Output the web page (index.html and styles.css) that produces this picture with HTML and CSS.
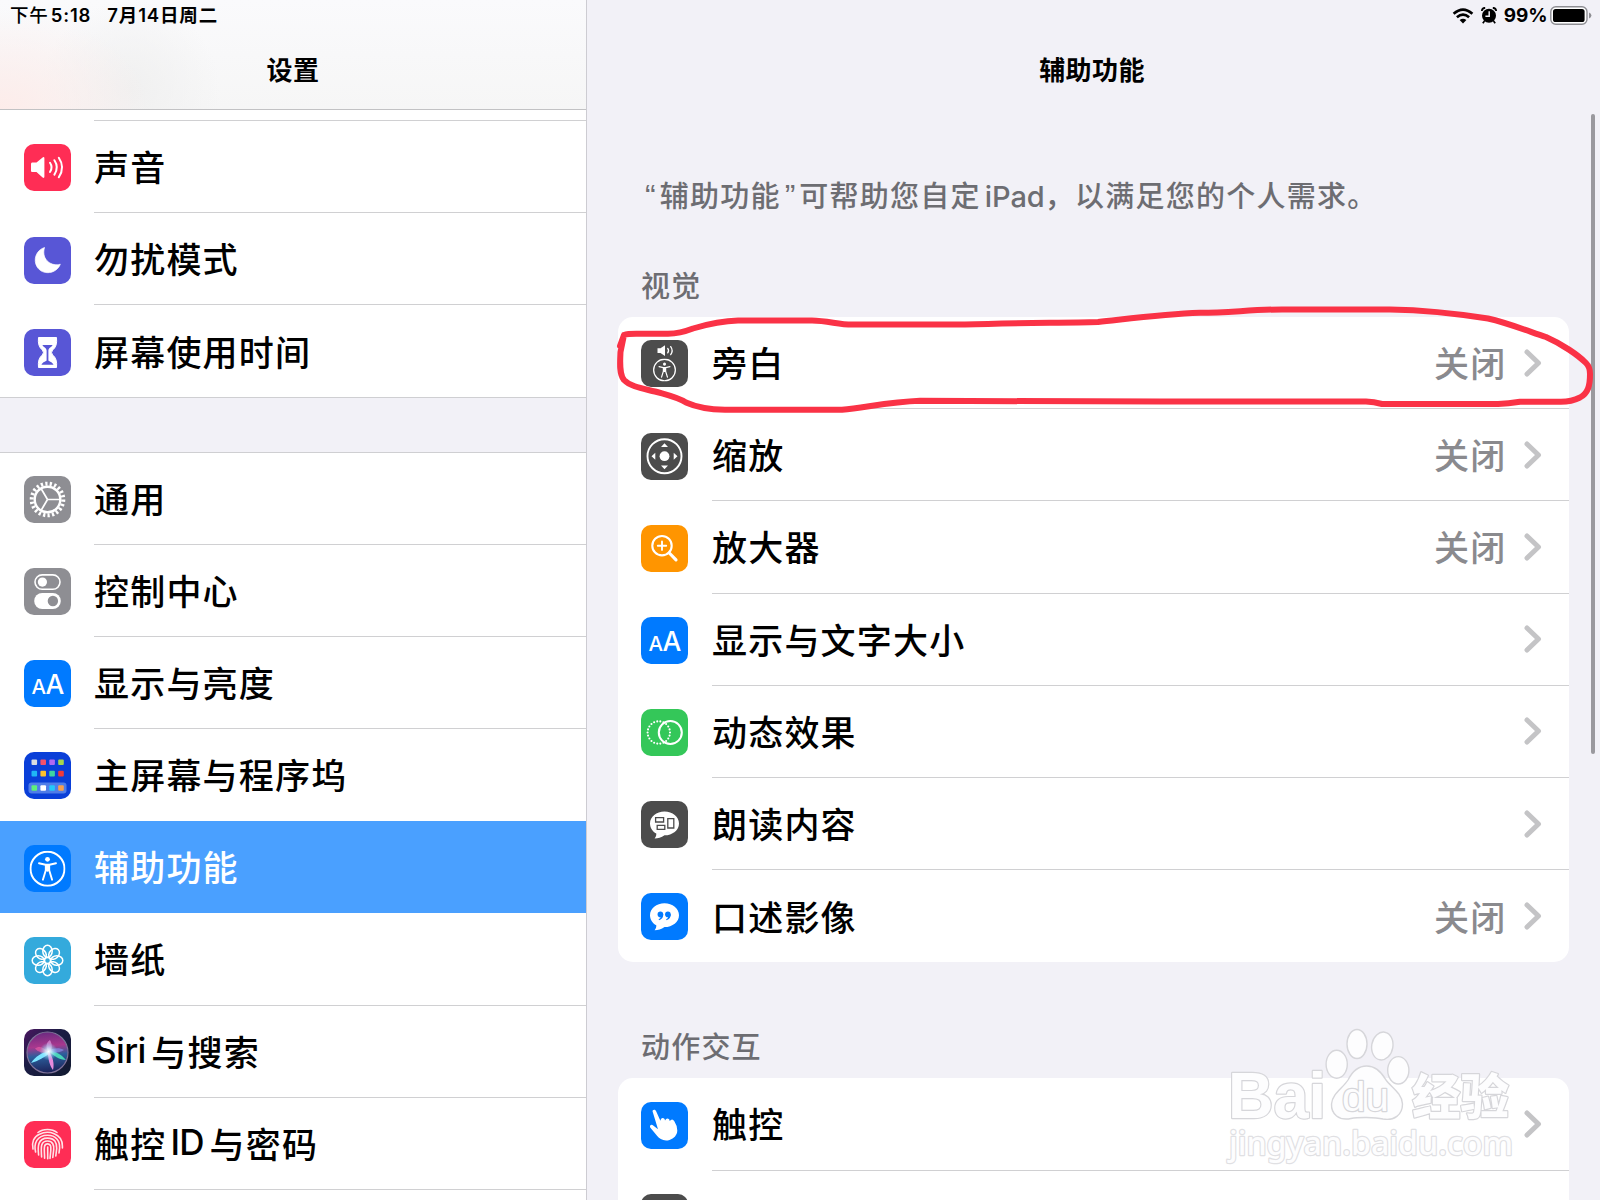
FILE: index.html
```html
<!DOCTYPE html>
<html lang="zh-CN">
<head>
    <meta charset="UTF-8">
    <meta name="viewport" content="width=device-width, initial-scale=1.0">
    <title>设置</title>
    <link rel="stylesheet" href="styles.css">
</head>
<body>

<!-- Iconos reutilizables -->
<svg class="defs" width="0" height="0">
    <defs>
        <symbol id="chevron" viewBox="0 0 18 28"><path d="M3 3 L14.5 14 L3 25" fill="none" stroke="#c4c4c6" stroke-width="5" stroke-linecap="round" stroke-linejoin="round"/></symbol>
        <symbol id="person" viewBox="0 0 36 36">
            <circle cx="18" cy="18" r="17" fill="none" stroke="#fff" stroke-width="2"/>
            <circle cx="18" cy="8.6" r="2.4" fill="#fff"/>
            <path d="M9.5 12.6 L16 14 H20 L26.5 12.6 M16.3 14 V19.5 L13.4 29 M19.7 14 V19.5 L22.6 29 M18 14 V20" fill="none" stroke="#fff" stroke-width="1.9" stroke-linecap="round" stroke-linejoin="round"/>
            <path d="M15.6 13.5 H20.4 V20 H15.6 Z" fill="#fff"/>
        </symbol>
        <symbol id="letters" viewBox="0 0 47 47">
            <text class="glyph" x="7.4" y="33.6" font-size="20.5">A</text>
            <text class="glyph" x="21.4" y="33.6" font-size="26.5">A</text>
        </symbol>
    </defs>
</svg>

<div class="screen">
    <aside class="sidebar">
        <header class="sidebar-header">
            <div class="status"><span>下午</span><span class="time">5:18</span><span>7月14日周二</span></div>
            <h1>设置</h1>
        </header>

        <ul class="menu first">
            <li class="stub"><span class="label"></span></li>
            <li>
                <svg class="icon red" viewBox="0 0 47 47">
                    <path d="M8 18.5 Q7 18.5 7 20 V26.5 Q7 28 8 28 H12.5 L18.6 33.6 Q20.4 34.6 20.4 32.6 V14.4 Q20.4 12.4 18.6 13.4 L12.5 18.5 Z" fill="#fff"/>
                    <path d="M26 18.7 Q29.2 23.3 26 28 M30.4 16.2 Q35.2 23.3 30.4 30.6 M34.8 13.7 Q41.4 23.3 34.8 33.2" fill="none" stroke="#fff" stroke-width="2" stroke-linecap="round"/>
                </svg>
                <span class="label">声音</span>
            </li>
            <li>
                <svg class="icon purple" viewBox="0 0 47 47"><path d="M20.5 10.5 C12 13.2 8.8 23 13.2 30 C18.5 38.6 32.5 37.2 36.3 27.2 C28.5 29.8 16.8 23.5 20.5 10.5 Z" fill="#fff" stroke="#fff" stroke-width=".7" stroke-linejoin="round"/></svg>
                <span class="label">勿扰模式</span>
            </li>
            <li class="last">
                <svg class="icon purple" viewBox="0 0 47 47">
                    <path d="M14.5 8.5 H32.5 Q33.5 17.5 28.600 21 Q26.5 23.6 28.6 26 Q33.5 29.5 32.5 38.5 H14.5 Q13.5 29.5 18.4 26 Q20.5 23.6 18.4 21 Q13.5 17.5 14.5 8.5 Z" fill="#fff" stroke="#fff" stroke-linejoin="round"/>
                    <path d="M18.4 16 H28.6 C27.6 18.2 24.6 18.6 24.4 21.5 V31.5 C25.6 32.8 28.5 33 29.5 35.8 H17.5 C18.5 33 21.4 32.8 22.6 31.5 V21.5 C22.4 18.6 19.4 18.2 18.4 16 Z" fill="#5856d6"/>
                </svg>
                <span class="label">屏幕使用时间</span>
            </li>
        </ul>

        <ul class="menu second">
            <li>
                <svg class="icon gray" viewBox="0 0 47 47" fill="none" stroke="#fff">
                    <circle cx="23.5" cy="23.5" r="15.8" stroke-width="4" pathLength="88" stroke-dasharray="2 2"/>
                    <circle cx="23.5" cy="23.5" r="12.8" stroke-width="2.4"/>
                    <path d="M23.5 23.5 H36 M23.5 23.5 L17.2 12.7 M23.5 23.5 L17.2 34.3" stroke-width="1.7"/>
                </svg>
                <span class="label">通用</span>
            </li>
            <li>
                <svg class="icon gray" viewBox="0 0 47 47">
                    <rect x="11" y="6.9" width="25" height="14.4" rx="7.2" fill="none" stroke="#fff" stroke-width="1.6"/>
                    <circle cx="18.4" cy="14.1" r="4.6" fill="#fff"/>
                    <rect x="10.2" y="25" width="26.6" height="16" rx="8" fill="#fff"/>
                    <circle cx="28.9" cy="33" r="5.2" fill="#8e8e93"/>
                </svg>
                <span class="label">控制中心</span>
            </li>
            <li>
                <svg class="icon blue" viewBox="0 0 47 47"><use href="#letters"/></svg>
                <span class="label">显示与亮度</span>
            </li>
            <li class="before-selected">
                <svg class="icon royal" viewBox="0 0 47 47">
                    <rect x="4.5" y="30.5" width="38" height="11" rx="3" fill="#4f7de8"/>
                    <rect x="7.5" y="7.5" width="5.6" height="5.6" rx="1" fill="#d8dce0"/>
                    <rect x="16.4" y="7.5" width="5.6" height="5.6" rx="1" fill="#f4516c"/>
                    <rect x="25.3" y="7.5" width="5.6" height="5.6" rx="1" fill="#b269f2"/>
                    <rect x="34.2" y="7.5" width="5.6" height="5.6" rx="1" fill="#a5d64c"/>
                    <rect x="7.5" y="18.8" width="5.6" height="5.6" rx="1" fill="#1fb6f5"/>
                    <rect x="16.4" y="18.8" width="5.6" height="5.6" rx="1" fill="#fbc02d"/>
                    <rect x="25.3" y="18.8" width="5.6" height="5.6" rx="1" fill="#3ed6a0"/>
                    <rect x="34.2" y="18.8" width="5.6" height="5.6" rx="1" fill="#f03a3a"/>
                    <rect x="7.5" y="33.2" width="5.6" height="5.6" rx="1" fill="#5ef07a"/>
                    <rect x="16.4" y="33.2" width="5.6" height="5.6" rx="1" fill="#fff"/>
                    <rect x="25.3" y="33.2" width="5.6" height="5.6" rx="1" fill="#22c8fa"/>
                    <rect x="34.2" y="33.2" width="5.6" height="5.6" rx="1" fill="#f9a04e"/>
                </svg>
                <span class="label">主屏幕与程序坞</span>
            </li>
            <li class="selected">
                <svg class="icon blue" viewBox="0 0 47 47"><use href="#person" x="5.5" y="5.7" width="36" height="36"/></svg>
                <span class="label">辅助功能</span>
            </li>
            <li>
                <svg class="icon cyan" viewBox="0 0 47 47" fill="none" stroke="#fff" stroke-width="1.5">
                    <g id="petals">
                        <ellipse cx="23.5" cy="14.2" rx="4.7" ry="6"/>
                        <ellipse cx="23.5" cy="32.8" rx="4.7" ry="6"/>
                        <ellipse cx="14.2" cy="23.5" rx="6" ry="4.7"/>
                        <ellipse cx="32.8" cy="23.5" rx="6" ry="4.7"/>
                    </g>
                    <use href="#petals" transform="rotate(45 23.5 23.5)"/>
                    <circle cx="23.5" cy="23.5" r="3"/>
                </svg>
                <span class="label">墙纸</span>
            </li>
            <li>
                <svg class="icon" viewBox="0 0 47 47">
                    <defs>
                        <linearGradient id="siriBg" x1="0" y1="0" x2="1" y2="1"><stop offset="0" stop-color="#4a1560"/><stop offset=".4" stop-color="#1c1d45"/><stop offset="1" stop-color="#101a30"/></linearGradient>
                        <linearGradient id="siriOrb" x1=".4" y1="0" x2=".5" y2="1"><stop offset="0" stop-color="#6a2a80"/><stop offset=".35" stop-color="#a8388e"/><stop offset=".58" stop-color="#2b5f9c"/><stop offset="1" stop-color="#1c2058"/></linearGradient>
                        <radialGradient id="siriGlow"><stop offset="0" stop-color="#fff"/><stop offset=".35" stop-color="#d8f4ff" stop-opacity=".75"/><stop offset="1" stop-color="#6fd8ff" stop-opacity="0"/></radialGradient>
                    </defs>
                    <rect width="47" height="47" fill="url(#siriBg)"/>
                    <circle cx="23.5" cy="23.5" r="20.5" fill="url(#siriOrb)" stroke="#7f7399" stroke-width="1.2"/>
                    <path d="M25 22 C18 23 11 28 7 34 C14 32 21 28 26 24 Z" fill="#7ce4ff"/>
                    <path d="M24 21 C29 27 36 31 42 31 C37 25 31 22 24 21 Z" fill="#48d4b8"/>
                    <path d="M24 22 C29 18.5 36 18.5 40 21 C35 24 29 25 24 22 Z" fill="#8c8fe8" opacity=".7"/>
                    <path d="M24 23 C24 31 26 37 29 41 C30.5 35 29 28 25 23 Z" fill="#e58adc"/>
                    <path d="M25 24 C21.5 19 21.5 14 26 11 C28.5 16 28.5 20 25 24 Z" fill="#e9a4e8" opacity=".6"/>
                    <path d="M24 23 C19 17 14 17 11 19.5 C14 23 19 25 24 23 Z" fill="#e85aa4" opacity=".7"/>
                    <circle cx="24.5" cy="22.5" r="9" fill="url(#siriGlow)"/>
                </svg>
                <span class="label"><span class="latin">Siri</span>与搜索</span>
            </li>
            <li>
                <svg class="icon red" viewBox="0 0 47 47" fill="none" stroke="#ffe3e8" stroke-width="1.6" stroke-linecap="round">
                    <path d="M14 11.5 C19 7.4 28 7.4 33 11.5"/>
                    <path d="M9 28 C7.4 21.5 9.8 15.5 15.5 13.2 C24 9 38.5 12 38.4 25 V27"/>
                    <path d="M11.6 31 C9.6 22.5 13 14.2 23.5 14.2 C32 14.2 36 20 35.6 27 L35 32"/>
                    <path d="M14.6 34 C13.6 25.5 13.8 17.1 23.5 17.1 C30.5 17.1 33 21.5 32.7 27.5 L31.8 35"/>
                    <path d="M17.6 36 C17.2 27.5 15.9 20 23.5 20 C29 20 30 24.5 29.7 28.5 L28.8 36.5"/>
                    <path d="M20.6 37.2 C20.6 29.5 18.8 22.9 23.5 22.9 C27.2 22.9 27 26.5 26.8 29.5 L26 37.4"/>
                    <path d="M23.7 26 V37.8"/>
                </svg>
                <span class="label">触控<span class="latin id">ID</span>与密码</span>
            </li>
            <li class="last"></li>
        </ul>
    </aside>

    <main class="detail">
        <div class="status right">
            <svg width="22" height="16" viewBox="0 0 22 16">
                <path d="M1.6 5.8 Q11 -2.6 20.4 5.8 M4.9 9.3 Q11 3.8 17.1 9.3" fill="none" stroke="#000" stroke-width="2.6"/>
                <path d="M11 15.6 L7.6 12.1 Q11 9.2 14.4 12.1 Z"/>
            </svg>
            <svg class="alarm" width="16" height="17" viewBox="0 0 16 17">
                <circle cx="8" cy="8.8" r="7"/>
                <path d="M.8 4 Q1 1 4.2 .8 M15.2 4 Q15 1 11.8 .8 M3.5 14 L1.8 16.2 M12.5 14 L14.2 16.2" fill="none" stroke="#000" stroke-width="1.7"/>
                <path d="M8.2 4.2 V9.3 H4.4" fill="none" stroke="#f2f1f7" stroke-width="1.5"/>
            </svg>
            <span>99%</span>
            <svg class="battery" width="42" height="19" viewBox="0 0 42 19">
                <rect x=".8" y=".8" width="36.2" height="17.4" rx="5" fill="#fff" stroke="#8e8e93" stroke-width="1.4"/>
                <rect x="3" y="3" width="31.6" height="13" rx="2.6"/>
                <path d="M39 6.4 Q41.4 7.4 41.4 9.5 Q41.4 11.6 39 12.6 Z" fill="#8e8e93"/>
            </svg>
        </div>
        <h1>辅助功能</h1>

        <p class="intro"><span class="quote">“</span>辅助功能<span class="quote">”</span>可帮助您自定<span class="latin ipad">iPad</span>，以满足您的个人需求。</p>

        <h2>视觉</h2>
        <ul class="card">
            <li>
                <svg class="icon dark" viewBox="0 0 47 47">
                    <path d="M16.5 8.3 H19.5 L24 5.2 V16 L19.5 12.9 H16.5 Z" fill="#fff"/>
                    <path d="M26.7 8.4 Q28.4 10.6 26.7 12.8 M29.7 6.6 Q32.6 10.6 29.7 14.6" fill="none" stroke="#fff" stroke-width="1.3" stroke-linecap="round"/>
                    <use href="#person" x="12" y="18.6" width="23" height="23"/>
                </svg>
                <div class="label"><span>旁白</span><span class="value">关闭</span><svg class="chevron"><use href="#chevron"/></svg></div>
            </li>
            <li>
                <svg class="icon dark" viewBox="0 0 47 47" fill="#fff">
                    <circle cx="23.5" cy="23.2" r="17" fill="none" stroke="#fff" stroke-width="1.9"/>
                    <circle cx="23.5" cy="23.2" r="4.9"/>
                    <path d="M20 14 L23.5 10.2 L27 14 Z M20 32.4 L23.5 36.2 L27 32.4 Z M14.3 19.7 L10.5 23.2 L14.3 26.7 Z M32.7 19.7 L36.5 23.2 L32.7 26.7 Z"/>
                </svg>
                <div class="label"><span>缩放</span><span class="value">关闭</span><svg class="chevron"><use href="#chevron"/></svg></div>
            </li>
            <li>
                <svg class="icon orange" viewBox="0 0 47 47" fill="none" stroke="#fff" stroke-linecap="round">
                    <circle cx="21" cy="20.7" r="9.7" stroke-width="2.1"/>
                    <path d="M16.8 20.7 H25.2 M21 16.5 V24.9" stroke-width="1.9"/>
                    <path d="M28.3 28 L35 34.8" stroke-width="3.2"/>
                </svg>
                <div class="label"><span>放大器</span><span class="value">关闭</span><svg class="chevron"><use href="#chevron"/></svg></div>
            </li>
            <li>
                <svg class="icon blue" viewBox="0 0 47 47"><use href="#letters"/></svg>
                <div class="label"><span>显示与文字大小</span><svg class="chevron"><use href="#chevron"/></svg></div>
            </li>
            <li>
                <svg class="icon green" viewBox="0 0 47 47" fill="none" stroke="#fff">
                    <circle cx="17.8" cy="23.5" r="11.2" stroke-width="2.1" pathLength="88" stroke-dasharray="0 4" stroke-linecap="round"/>
                    <circle cx="29.3" cy="23.5" r="11.5" stroke-width="2.1"/>
                </svg>
                <div class="label"><span>动态效果</span><svg class="chevron"><use href="#chevron"/></svg></div>
            </li>
            <li>
                <svg class="icon dark" viewBox="0 0 47 47">
                    <path d="M23.5 10.5 C31.5 10.5 38 15.8 38 22.4 C38 29 31.5 34.3 23.5 34.3 C20.3 36.6 17 37.3 13.6 37.4 C14.8 36 15.4 34.6 15.3 32.5 C11.4 30.3 9 26.8 9 22.4 C9 15.8 15.5 10.5 23.5 10.5 Z" fill="#fff"/>
                    <path d="M14.6 16.6 H22.6 V21 H14.6 Z M16.2 24.3 H23.8 V28.4 H16.2 Z M26.8 17.6 H32.8 V27 H26.8 Z" fill="none" stroke="#4c4c4c" stroke-width="1.3"/>
                </svg>
                <div class="label"><span>朗读内容</span><svg class="chevron"><use href="#chevron"/></svg></div>
            </li>
            <li class="last">
                <svg class="icon blue" viewBox="0 0 47 47">
                    <path d="M23.5 10.3 C31.5 10.3 38 15.6 38 22.2 C38 28.8 31.5 34.1 23.5 34.1 C20.3 36.4 17 37.1 13.6 37.2 C14.8 35.8 15.4 34.4 15.3 32.3 C11.4 30.1 9 26.6 9 22.2 C9 15.6 15.5 10.3 23.5 10.3 Z" fill="#fff"/>
                    <g fill="#007aff"><circle cx="19.4" cy="21.4" r="2.8"/><path d="M22.2 21 Q22.6 25.8 18 27.3 L17.6 26.4 Q20 25 20 22.6 Z"/><circle cx="26.9" cy="21.4" r="2.8"/><path d="M29.7 21 Q30.1 25.8 25.5 27.3 L25.1 26.4 Q27.5 25 27.5 22.6 Z"/></g>
                </svg>
                <div class="label"><span>口述影像</span><span class="value">关闭</span><svg class="chevron"><use href="#chevron"/></svg></div>
            </li>
        </ul>

        <h2 class="motor">动作交互</h2>
        <ul class="card">
            <li>
                <svg class="icon blue" viewBox="0 0 47 47">
                    <path d="M11.6 9.6 C11 7.6 14 6.8 14.9 8.8 L19.4 18.8 L20 17 Q21.6 14.8 23.6 17 L24 18.4 Q26 14.8 28.3 17.6 L28.7 19 Q31.2 16 33.2 19 Q36.2 23.5 36.3 28.5 C36.2 33 33 36.6 28.5 38 C23 39.6 18.6 37.2 15.8 33.6 L9.2 25.6 C8.2 23.6 10.4 21.8 12.2 23.4 L17 27.2 Z" fill="#fff"/>
                </svg>
                <div class="label"><span>触控</span><svg class="chevron"><use href="#chevron"/></svg></div>
            </li>
            <li class="last">
                <svg class="icon dark" viewBox="0 0 47 47"><path d="M9 13 H38 V34 H9 Z" fill="none" stroke="#fff" stroke-width="2"/></svg>
                <div class="label"><span>切换控制</span><svg class="chevron"><use href="#chevron"/></svg></div>
            </li>
        </ul>
    </main>

    <div class="scrollbar"></div>

    <!-- Trazo rojo a mano -->
    <svg class="marker" viewBox="0 0 1600 1200">
        <path d="M620 346 L624 335 Q628 333.5 640 333.8 H668 Q680 333.5 693 328.5 C708 324 722 320.8 738 320.5 H812 C828 320.8 838 324.4 852 324.6 H965 C1010 322.6 1060 323 1098 322 C1135 318 1165 314 1200 312.8 C1230 312.6 1250 309.7 1282 309.4 H1390 C1430 310 1460 314 1488 318.5 C1508 323 1528 331 1546 337 C1562 344 1578 355 1586 363 Q1590 367 1590 374 C1590 386 1588 393 1580 397.5 Q1571 402 1560 401.8 H1520 Q1508 403.8 1498 404 H1382 Q1374 402 1366 401.6 H1160 L920 400.8 C890 402 868 407 842 409.8 H725 C708 409.5 696 407 686 402.5 C677 397 667 395 655 391.5 C643 388.5 631 387 624 380 C619 374 620 362 620.5 352 L624 335"/>
    </svg>

    <!-- Marca de agua -->
    <svg class="watermark" viewBox="0 0 320 160">
        <g class="paw">
            <ellipse cx="136.7" cy="44.3" rx="10.6" ry="14"/>
            <ellipse cx="157" cy="24" rx="10" ry="14.5"/>
            <ellipse cx="182.3" cy="26" rx="10.6" ry="14" transform="rotate(10 182.3 26)"/>
            <ellipse cx="198.3" cy="50.3" rx="10.6" ry="13.7"/>
            <path d="M166.7 46 C176 46 182 53 186 60 C191 67 202 73 202.5 84 C202.5 95 194 101 183 99 C175 97 158 97 151 98.5 C139 101 131 94 131.5 84 C132 74 143 68 148 60 C152 52 158 46 166.7 46 Z"/>
        </g>
        <text class="brand" x="28" y="97.5" font-size="64" textLength="98" lengthAdjust="spacingAndGlyphs">Bai</text>
        <text class="du" x="142" y="91" font-size="41" textLength="47" lengthAdjust="spacingAndGlyphs">du</text>
        <text class="brand cn" x="212" y="94" font-size="48" textLength="97" lengthAdjust="spacingAndGlyphs">经验</text>
        <text class="url" x="29" y="135" font-size="33" textLength="284" lengthAdjust="spacingAndGlyphs">jingyan.baidu.com</text>
    </svg>
</div>

</body>
</html>
```
FILE: styles.css
```css
* {
    box-sizing: border-box;
}
body {
    margin: 0;
    font-family: Inter, "Noto Sans CJK SC", sans-serif;
    font-weight: 500;
    color: #000;
    background-color: #f2f1f7;
    overflow: hidden;
}
ul {
    list-style: none;
    margin: 0;
    padding: 0;
}
.defs {
    position: absolute;
}
.screen {
    position: relative;
    display: flex;
    width: 1600px;
    height: 1200px;
    overflow: hidden;
}

/* Columna izquierda */
.sidebar {
    width: 587px;
    flex: none;
    border-right: 1px solid #cdccd2;
}
.sidebar-header {
    height: 110px;
    border-bottom: 1px solid #c2c2c4;
    background: radial-gradient(ellipse 150px 100px at 0 100%, #fdecea, rgba(253, 236, 234, 0) 100%),
        radial-gradient(ellipse 90px 90px at 130px 90px, #f0f0f0, rgba(240, 240, 240, 0) 100%),
        linear-gradient(#fafafc, #f6f6f6);
}
.status {
    display: flex;
    align-items: center;
    height: 31px;
    padding-left: 10px;
    font-size: 18.5px;
    font-weight: 600;
    line-height: 28px;
    letter-spacing: 0.85px;
}
.status span:first-child,
.status span:last-child {
    padding-bottom: 1px;
}
.status span:first-child {
    font-weight: 500;
}
.status .time {
    margin: 0 16px 0 2px;
    padding-bottom: 1px;
}
h1 {
    margin: 0;
    height: 78px;
    line-height: 80px;
    text-align: center;
    font-size: 26px;
    font-weight: 700;
    letter-spacing: 0.4px;
}
.menu {
    background-color: #fff;
}
.menu li,
.card li {
    display: flex;
    align-items: center;
    height: 92.2px;
    padding-left: 23.5px;
}
.card li {
    padding-left: 23px;
}
.menu .stub {
    height: 11px;
    padding-left: 94px;
}
.menu.first {
    height: 287.5px;
    border-bottom: 1px solid #cfcfd2;
}
.menu.second {
    margin-top: 54.5px;
    border-top: 1px solid #cfcfd2;
}
.menu.second li:first-child {
    height: 91.6px;
}
.label {
    display: flex;
    align-items: center;
    flex: 1;
    height: 100%;
    margin-left: 23.5px;
    padding-bottom: 2px;
    border-bottom: 1px solid #d0d0d2;
    font-size: 35px;
    letter-spacing: 1.2px;
    white-space: nowrap;
}
.card .label {
    margin-left: 24px;
}
.stub .label {
    margin-left: 0;
    padding: 0;
}
.last .label {
    border-bottom: none;
}
.latin {
    margin-right: 5.5px;
    letter-spacing: -0.6px;
}
.latin.id {
    margin-left: 4px;
}
.selected {
    background-color: #4aa0ff;
    color: #fff;
}
.selected .label,
.before-selected .label {
    border-color: transparent;
}

/* Iconos */
.icon {
    width: 47px;
    height: 47px;
    flex: none;
    margin-top: 1.5px;
    border-radius: 10px;
}
.glyph {
    font-family: Inter, sans-serif;
    font-weight: 500;
    fill: #fff;
}
.red { background-color: #ff2d55; }
.purple { background-color: #5856d6; }
.gray { background-color: #8e8e93; }
.blue { background-color: #007aff; }
.royal { background-color: #0a3fd8; }
.cyan { background-color: #34aadc; }
.dark { background-color: #4c4c4c; }
.orange { background-color: #ff9500; }
.green { background-color: #34c759; }

/* Columna derecha */
.detail {
    flex: 1;
    padding: 0 31.5px 0 31px;
}
.status.right {
    justify-content: flex-end;
    margin-right: -23px;
    padding: 0;
}
.status.right span {
    font-size: 19px;
    font-weight: 700;
    letter-spacing: -0.1px;
    padding: 0;
    margin: 0 2px 0 7px;
}
.alarm {
    margin-left: 7px;
}
.detail h1 {
    margin: 0 -30px 0 -32.5px;
}
.intro {
    margin: 64px 0 0 23px;
    height: 48px;
    line-height: 48px;
    font-size: 29px;
    letter-spacing: 1.25px;
    color: #6d6d72;
    white-space: nowrap;
}
.quote {
    font-family: "Liberation Sans", sans-serif;
    font-size: 32px;
    line-height: 1;
    letter-spacing: 0;
    margin: 0 4px;
}
.latin.ipad {
    margin: 0 0 0 4px;
    letter-spacing: -0.1px;
}
h2 {
    margin: 41px 0 0 23px;
    height: 55px;
    line-height: 50px;
    font-size: 29px;
    font-weight: 500;
    letter-spacing: 1.2px;
    color: #6d6d72;
}
h2.motor {
    margin-top: 61px;
}
.card {
    background-color: #fff;
    border-radius: 15px;
}
.value {
    margin-left: auto;
    color: #8a8a8e;
}
.chevron {
    width: 18px;
    height: 28px;
    margin: 2px 27px 0 17px;
}
.label span:first-child + .chevron {
    margin-left: auto;
}

/* Elementos superpuestos */
.scrollbar {
    position: absolute;
    left: 1591px;
    top: 114px;
    width: 4px;
    height: 640px;
    border-radius: 2px;
    background-color: #9a999e;
}
.marker {
    position: absolute;
    left: 0;
    top: 0;
    width: 1600px;
    height: 1200px;
}
.marker path {
    fill: none;
    stroke: #fa3246;
    stroke-width: 6;
    stroke-linecap: round;
    stroke-linejoin: round;
}
.watermark {
    position: absolute;
    left: 1200px;
    top: 1020px;
    width: 320px;
    height: 160px;
}
.paw,
.watermark text {
    fill: #fdfdfe;
    stroke: #d6d6da;
    stroke-width: 1.4;
}
.watermark text {
    stroke-width: 2.4;
    stroke-linejoin: round;
    paint-order: stroke;
}
.watermark .brand {
    font-family: "Liberation Sans", sans-serif;
    font-weight: 700;
}
.watermark .cn {
    font-family: "Noto Sans CJK SC", sans-serif;
    font-weight: 900;
}
.watermark .du {
    font-family: "Liberation Sans", sans-serif;
}
.watermark .url {
    font-family: "Noto Sans", sans-serif;
    stroke: #e0e0e3;
}
```
